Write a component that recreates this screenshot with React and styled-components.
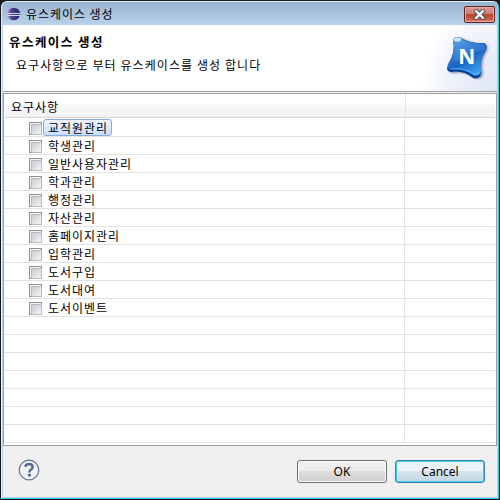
import React from "react";
import styled, { createGlobalStyle } from "styled-components";

const GlobalStyle = createGlobalStyle`
  * { box-sizing: border-box; }
  body { margin: 0; background: #000; }
`;

const Frame = styled.div`
  width: 500px;
  height: 500px;
  padding: 1px 1px 1px 0;
  background: #17171c;
  overflow: hidden;
  font: 12px/18px "Noto Sans CJK KR", sans-serif;
  color: #000;
`;

const Window = styled.div`
  height: 498px;
  display: flex;
  flex-direction: column;
  margin-left: 1px;
  border: 1px solid #e4f1fc;
  border-right-color: #25d0ee;
  border-bottom-color: #25d0ee;
  border-radius: 6px 6px 0 0;
  background: #b9d1ea;
  padding: 0 1px 1px;
  overflow: hidden;
`;

const TitleBar = styled.header`
  height: 23px;
  flex: none;
  display: flex;
  align-items: center;
  margin: 0 -1px;
  padding: 0 3px 0 4px;
  background: linear-gradient(#99b4d1, #b9d1ea);
`;

const TitleText = styled.span`
  flex: 1;
  margin-left: 5px;
  padding-top: 1px;
  letter-spacing: 0.95px;
  white-space: nowrap;
`;

const CloseButton = styled.button`
  width: 31px;
  height: 17px;
  margin-top: 1px;
  padding: 0;
  display: grid;
  place-items: center;
  border: 1px solid #5b2325;
  border-radius: 2px;
  box-shadow: inset 0 0 0 1px #e6aaa0;
  background: linear-gradient(#dc9b92 0, #cd7d73 45%, #b94635 50%, #c65a43 80%, #d58a73);
`;

const Banner = styled.section`
  height: 66px;
  flex: none;
  display: flex;
  justify-content: space-between;
  background: radial-gradient(ellipse 76px 82px at 100% 90%, #dfe6f6 0, #edf1fb 60%, #fff 100%), #fff;
`;

const BannerText = styled.div`
  padding: 8px 0 0 6px;
`;

const Heading = styled.h1`
  margin: 0;
  font-size: 12.5px;
  line-height: 18px;
  font-weight: 700;
  letter-spacing: 1.45px;
`;

const Description = styled.p`
  margin: 5px 0 0 7px;
  line-height: 18px;
  letter-spacing: 1.08px;
  white-space: nowrap;
`;

const Body = styled.main`
  flex: 1;
  min-height: 0;
  display: flex;
  flex-direction: column;
  background: #f0f0f0;
  border-top: 1px solid #a0a0a0;
`;

const Table = styled.section`
  height: 353px;
  flex: none;
  margin-top: 1px;
  padding: 0 1px;
  display: flex;
  flex-direction: column;
  background: #fff;
  border: 1px solid #a0a0a0;
  overflow: hidden;
`;

const HeaderRow = styled.div`
  height: 24px;
  flex: none;
  display: grid;
  grid-template-columns: 401px 1fr;
  background: linear-gradient(#fff 0 10px, #f7f8fa 10px, #f1f2f4);
  border-bottom: 1px solid #d5d5d5;
`;

const HeaderCell = styled.div`
  padding: 4px 0 0 6px;
  line-height: 18px;
  letter-spacing: 0.95px;
  border-right: 1px solid ${(p) => (p.$last ? "transparent" : "#dfe1e4")};
`;

const Row = styled.div`
  height: ${(p) => (p.$first ? 19 : 18)}px;
  padding-top: ${(p) => (p.$first ? 1 : 0)}px;
  flex: none;
  display: grid;
  grid-template-columns: 400px 1fr;
  border-bottom: 1px solid #e2e2e2;
`;

const Cell = styled.div`
  display: flex;
  align-items: center;
  padding-left: 24px;
  border-right: 1px solid #e2e2e2;
`;

const Checkbox = styled.span`
  width: 13px;
  height: 13px;
  flex: none;
  margin-top: 2px;
  border: 1px solid #8e8f8f;
  padding: 1px;
  background: #f4f4f4;

  &::before {
    content: "";
    display: block;
    width: 9px;
    height: 9px;
    border: 1px solid #b7bcc2;
    background: linear-gradient(135deg, #c8ccd2, #f5f5f5);
  }
`;

const Label = styled.span`
  height: 17px;
  margin-left: 1px;
  padding: 0 3px 0 4px;
  line-height: 16px;
  letter-spacing: 0.95px;
  white-space: nowrap;
  border: 1px solid ${(p) => (p.$selected ? "#84acdd" : "transparent")};
  border-radius: 3px;
  background: ${(p) => (p.$selected ? "linear-gradient(#edf5ff, #c8dfff)" : "none")};
`;

const Footer = styled.footer`
  flex: 1;
  display: flex;
  align-items: flex-start;
  padding: 14px 12px 0 15px;
`;

const Actions = styled.div`
  display: flex;
  gap: 8px;
  margin-left: auto;
`;

const Button = styled.button`
  width: 90px;
  height: 23px;
  padding: 0;
  font: 12px/19px "Noto Sans", sans-serif;
  color: #000;
  border: 1px solid ${(p) => (p.$focused ? "#3c7fb1" : "#707070")};
  border-radius: 3px;
  box-shadow: inset 0 0 0 1px ${(p) => (p.$focused ? "#43cdf5" : "#fafafa")};
  background: ${(p) =>
    p.$focused
      ? "linear-gradient(#eaf3f9 0 48%, #d6e5ee 50%, #c0d7e2)"
      : "linear-gradient(#f2f2f2, #ebebeb 48%, #dddddd 50%, #cfcfcf)"};
`;

function EclipseIcon() {
  return (
    <svg width="15" height="16" viewBox="1 0 15 16">
      <defs>
        <linearGradient id="sphere">
          <stop stopColor="#9a8bd0" />
          <stop offset=".3" stopColor="#4b438c" />
          <stop offset="1" stopColor="#292461" />
        </linearGradient>
      </defs>
      <ellipse cx="7.7" cy="8" rx="6.7" ry="6.4" fill="#bda6da" />
      <circle cx="8.9" cy="8" r="6.2" fill="url(#sphere)" />
      <path d="M2 7.5h13M2 9.5h13" stroke="#d8d8f5" strokeWidth="1" />
    </svg>
  );
}

function CloseIcon() {
  return (
    <svg width="13" height="11" viewBox="0 0 13 11">
      <path d="M3.4 2.4 9.6 8.6M9.6 2.4 3.4 8.6" stroke="#4c4650" strokeWidth="4.4" strokeLinecap="square" />
      <path d="M3.3 2.3 9.7 8.7M9.7 2.3 3.3 8.7" stroke="#fff" strokeWidth="2.5" strokeLinecap="square" />
    </svg>
  );
}

const LogoSvg = styled.svg`
  flex: none;
  margin: 7px 4px 0 0;
`;

const LogoLetter = styled.text`
  font: 700 21px "Open Sans", sans-serif;
  fill: #fff;
`;

function Logo() {
  return (
    <LogoSvg width="48" height="50" viewBox="0 0 48 50">
      <defs>
        <linearGradient id="glass" x1="0" y1="0" x2=".7" y2="1">
          <stop stopColor="#8bc6f6" />
          <stop offset=".25" stopColor="#4189dc" />
          <stop offset=".6" stopColor="#1b62c4" />
          <stop offset="1" stopColor="#3aa2f0" />
        </linearGradient>
        <filter id="soft" x="-20%" y="-20%" width="140%" height="140%">
          <feGaussianBlur stdDeviation="1" />
        </filter>
      </defs>
      <path d="M9 8Q12 4 17 6Q27 12 38 11Q43 12 41 18Q34 29 37 41Q36 47 29 45Q19 38 7 40Q1 39 4 33Q12 20 9 8Z" fill="#7886a7" filter="url(#soft)" transform="translate(1 1)" />
      <path d="M8 8Q10 3 16 6Q26 12 38 11Q43 12 41 18Q33 29 36 41Q35 48 28 46Q18 38 6 40Q0 39 3 34Q11 20 8 8Z" fill="#0b3f92" />
      <path d="M8 8Q10 3 16 6Q26 12 38 11Q43 12 41 18Q33 28 36 39Q34 45 28 43Q18 36 6 38Q1 37 3 32Q11 20 8 8Z" fill="url(#glass)" />
      <path d="M9 8Q11 4 16 7Q26 13 38 12Q41 13 39 18Q28 20 24 23Q18 28 9 29Q12 18 9 8Z" fill="#82bcf3" opacity=".22" />
      <ellipse cx="12.5" cy="7.5" rx="3.6" ry="2" fill="#e0f4ff" opacity=".85" />
      <path d="M6 37Q18 35 29 42Q34 43 35 39" fill="none" stroke="#4cb5ff" strokeWidth="1.2" opacity=".8" />
      <LogoLetter x="13.3" y="32" textLength="17" lengthAdjust="spacingAndGlyphs">N</LogoLetter>
    </LogoSvg>
  );
}

const HelpSvg = styled.svg`
  flex: none;
  margin-top: -1px;
`;

function HelpIcon() {
  return (
    <HelpSvg width="22" height="22" viewBox="0 0 22 22">
      <circle cx="11" cy="11" r="9.8" fill="#f2f2f4" stroke="#5d7192" strokeWidth="1.2" />
      <path d="M7.4 7.8Q7.7 4.8 11.2 4.9Q14.7 5 14.7 7.9Q14.7 9.6 12.7 10.8Q11.4 11.6 11.4 13.4" fill="none" stroke="#536b92" strokeWidth="2.5" />
      <rect x="10" y="14.7" width="2.9" height="2.7" rx=".6" fill="#536b92" />
    </HelpSvg>
  );
}

const requirements = [
  "교직원관리",
  "학생관리",
  "일반사용자관리",
  "학과관리",
  "행정관리",
  "자산관리",
  "홈페이지관리",
  "입학관리",
  "도서구입",
  "도서대여",
  "도서이벤트",
];
const rows = [...requirements, ...Array(7).fill(null)];

export default function App() {
  return (
    <>
      <GlobalStyle />
      <Frame>
        <Window>
          <TitleBar>
            <EclipseIcon />
            <TitleText>유스케이스 생성</TitleText>
            <CloseButton aria-label="닫기"><CloseIcon /></CloseButton>
          </TitleBar>
          <Banner>
            <BannerText>
              <Heading>유스케이스 생성</Heading>
              <Description>요구사항으로 부터 유스케이스를 생성 합니다</Description>
            </BannerText>
            <Logo />
          </Banner>
          <Body>
            <Table>
              <HeaderRow>
                <HeaderCell>요구사항</HeaderCell>
                <HeaderCell $last />
              </HeaderRow>
              {rows.map((name, i) => (
                <Row key={i} $first={i === 0}>
                  <Cell>
                    {name && <Checkbox />}
                    {name && <Label $selected={i === 0}>{name}</Label>}
                  </Cell>
                </Row>
              ))}
            </Table>
            <Footer>
              <HelpIcon />
              <Actions>
                <Button>OK</Button>
                <Button $focused>Cancel</Button>
              </Actions>
            </Footer>
          </Body>
        </Window>
      </Frame>
    </>
  );
}
